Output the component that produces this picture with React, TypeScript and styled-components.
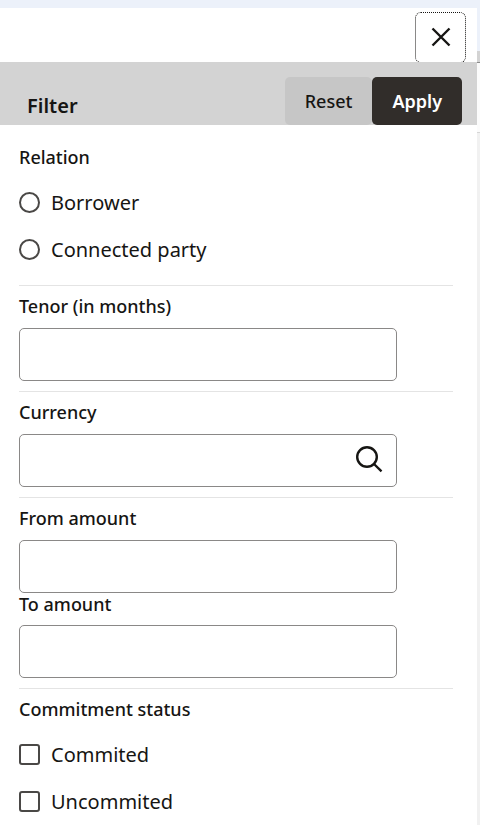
import React from "react";
import styled, { createGlobalStyle, css } from "styled-components";

const GlobalStyle = createGlobalStyle`
  *, *::before, *::after { box-sizing: border-box; }
  body {
    margin: 0;
    background: #fff;
    color: #161513;
    font-family: "Noto Sans", "Open Sans", sans-serif;
    overflow: hidden;
  }
  button, input { font: inherit; color: inherit; }
`;

const Page = styled.div`
  display: flex;
  flex-direction: column;
  height: 100vh;
  overflow: hidden;
`;

const TopStrip = styled.div`
  flex: none;
  height: 8px;
  background: #ecf1fa;
`;

const Body = styled.div`
  flex: 1;
  min-height: 0;
  display: flex;
`;

const Drawer = styled.aside`
  flex: 1;
  min-width: 0;
  background: #fff;
`;

const Backdrop = styled.div`
  flex: none;
  width: 3px;
  display: flex;
  flex-direction: column;
  background: #f1f1f1;
`;

const BackdropHeader = styled.div`
  height: 55px;
  background: linear-gradient(#ecf1fa 43px, #d3d3d3 43px);
  border-bottom: 1px solid #8c8c8c;
`;

const BackdropRow = styled.div`
  height: 70px;
  background: #fbfbfb;
  border-bottom: 1px solid #d6d6d6;
`;

const CloseBar = styled.div`
  display: flex;
  justify-content: flex-end;
  height: 54px;
  padding: 4px 11px 0 0;
  overflow: hidden;
`;

const CloseButton = styled.button`
  display: grid;
  place-items: center;
  width: 51px;
  height: 51px;
  padding: 0 0 2px;
  border: 1px dotted #161513;
  border-radius: 6px;
  background: #fff;
`;

const TitleBar = styled.header`
  display: flex;
  justify-content: space-between;
  align-items: flex-end;
  height: 63px;
  padding: 0 15px 0 27px;
  background: #d3d3d3;
`;

const Title = styled.h1`
  margin: 0 0 6px;
  font-size: 20px;
  line-height: 27px;
  font-weight: 600;
`;

const Actions = styled.div`
  display: flex;
`;

const ActionButton = styled.button<{ $primary?: boolean }>`
  height: 48px;
  padding: 0 20px;
  border: 0;
  border-radius: 5px;
  font-size: 18px;
  line-height: 24px;
  font-weight: 500;
  background: #c6c6c6;
  ${(p) =>
    p.$primary &&
    css`
      background: #312d2a;
      color: #fff;
      font-weight: 600;
    `}
`;

const Form = styled.form`
  padding: 11px 24px 0 19px;
`;

const sectionStyle = css`
  margin: 0;
  padding: 9px 0 10px;
  border: 0;
  border-top: 1px solid #e4e4e4;
`;

const Section = styled.div`
  ${sectionStyle}
`;

const ChoiceSection = styled.div<{ $first?: boolean }>`
  ${sectionStyle}
  padding-bottom: 12px;
  ${(p) => p.$first && "border-top-color: transparent;"}
`;

const labelStyle = css`
  display: block;
  padding-bottom: 10px;
  font-size: 18px;
  line-height: 23px;
  font-weight: 500;
`;

const Label = styled.label`
  ${labelStyle}
`;

const GroupLabel = styled.div`
  ${labelStyle}
`;

const InputBox = styled.div`
  display: flex;
  align-items: center;
  width: 87%;
  height: 53px;
  border: 1px solid #8a8887;
  border-radius: 5px;
  background: #fff;
  & + label {
    padding-bottom: 9px;
  }
`;

const TextInput = styled.input`
  flex: 1;
  min-width: 0;
  height: 100%;
  padding: 0 14px;
  border: 0;
  outline: 0;
  background: transparent;
  font-size: 20px;
`;

const SearchButton = styled.button`
  display: grid;
  place-items: center;
  padding: 0 0 3px;
  margin-right: 13px;
  border: 0;
  background: transparent;
`;

const Choice = styled.label`
  display: flex;
  align-items: center;
  gap: 11px;
  height: 47px;
  font-size: 20px;
  line-height: 28px;
`;

const Mark = styled.input`
  appearance: none;
  flex: none;
  width: 21px;
  height: 21px;
  margin: 0;
  border: 2px solid #4a4846;
  border-radius: ${(p) => (p.type === "radio" ? "50%" : "3px")};
  background: #fff;
  &:checked {
    background: #312d2a;
    box-shadow: inset 0 0 0 3px #fff;
  }
`;

function CloseIcon() {
  return (
    <svg width="20" height="20" viewBox="0 0 20 20" fill="none" stroke="#161513" strokeWidth="2.4" aria-hidden="true">
      <path d="M1.5 1.5 18.5 18.5M18.5 1.5 1.5 18.5" />
    </svg>
  );
}

function SearchIcon() {
  return (
    <svg width="28" height="28" viewBox="0 0 28 28" fill="none" stroke="#161513" strokeWidth="2.4" aria-hidden="true">
      <circle cx="12" cy="12" r="9.8" />
      <path d="M19 19 26.5 26.3" />
    </svg>
  );
}

interface FieldProps {
  id: string;
  label: string;
  search?: boolean;
}

function Field({ id, label, search }: FieldProps) {
  return (
    <>
      <Label htmlFor={id}>{label}</Label>
      <InputBox>
        <TextInput id={id} type="text" />
        {search && (
          <SearchButton type="button" aria-label="Search currency">
            <SearchIcon />
          </SearchButton>
        )}
      </InputBox>
    </>
  );
}

interface ChoiceGroupProps {
  label: string;
  name: string;
  type: "radio" | "checkbox";
  options: string[];
  first?: boolean;
}

function ChoiceGroup({ label, name, type, options, first }: ChoiceGroupProps) {
  return (
    <ChoiceSection $first={first} role={type === "radio" ? "radiogroup" : "group"} aria-labelledby={`${name}-label`}>
      <GroupLabel id={`${name}-label`}>{label}</GroupLabel>
      {options.map((option) => (
        <Choice key={option}>
          <Mark type={type} name={name} value={option} />
          {option}
        </Choice>
      ))}
    </ChoiceSection>
  );
}

export default function App() {
  return (
    <>
      <GlobalStyle />
      <Page>
        <TopStrip />
        <Body>
          <Drawer aria-label="Filter">
            <CloseBar>
              <CloseButton type="button" aria-label="Close">
                <CloseIcon />
              </CloseButton>
            </CloseBar>
            <TitleBar>
              <Title>Filter</Title>
              <Actions>
                <ActionButton type="reset" form="filter-form">Reset</ActionButton>
                <ActionButton type="submit" form="filter-form" $primary>Apply</ActionButton>
              </Actions>
            </TitleBar>
            <Form id="filter-form" onSubmit={(e) => e.preventDefault()}>
              <ChoiceGroup first label="Relation" name="relation" type="radio" options={["Borrower", "Connected party"]} />
              <Section>
                <Field id="tenor" label="Tenor (in months)" />
              </Section>
              <Section>
                <Field id="currency" label="Currency" search />
              </Section>
              <Section>
                <Field id="from-amount" label="From amount" />
                <Field id="to-amount" label="To amount" />
              </Section>
              <ChoiceGroup label="Commitment status" name="commitment" type="checkbox" options={["Commited", "Uncommited"]} />
            </Form>
          </Drawer>
          <Backdrop>
            <BackdropHeader />
            <BackdropRow />
          </Backdrop>
        </Body>
      </Page>
    </>
  );
}
